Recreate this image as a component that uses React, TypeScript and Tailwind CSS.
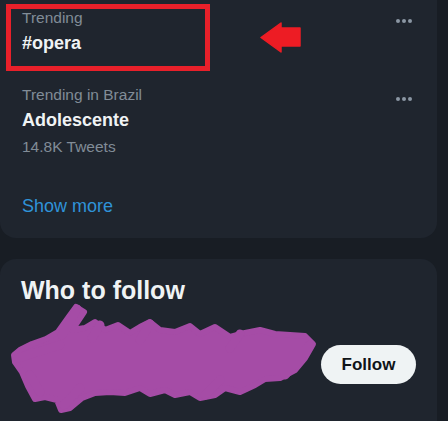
import React from "react";

type TrendProps = {
	label: string;
	topic: string;
	count?: string;
	className?: string;
};

function Dots() {
	return (
		<div className="flex gap-[2px]">
			<span className="w-[4px] h-[4px] rounded-full bg-[#8b97a3]" />
			<span className="w-[4px] h-[4px] rounded-full bg-[#8b97a3]" />
			<span className="w-[4px] h-[4px] rounded-full bg-[#8b97a3]" />
		</div>
	);
}

function Trend({ label, topic, count, className }: TrendProps) {
	return (
		<div className={"relative px-[22px] " + (className ?? "")}>
			<div className="text-[15.5px] leading-[20px] text-[#818c97]">{label}</div>
			<div className="mt-[3px] text-[18px] leading-[24px] font-bold text-[#eff3f4]">
				{topic}
			</div>
			{count && (
				<div className="mt-[5px] text-[15.5px] leading-[20px] text-[#818c97]">
					{count}
				</div>
			)}
		</div>
	);
}

function Scribble() {
	const outline =
		"M76 307 L84 312 L72 330 L85 328 L95 322 L105 330 L118 325 L130 333 L140 327 L150 322 L160 330 L175 332 L190 326 L200 334 L215 327 L230 337 L245 333 L260 330 L275 334 L290 335 L305 336 L313 344 L305 358 L295 370 L280 378 L265 379 L255 385 L240 392 L225 388 L215 395 L200 398 L190 392 L175 395 L165 390 L150 394 L140 388 L125 393 L110 392 L95 393 L82 398 L70 408 L61 410 L57 400 L45 397 L35 399 L28 386 L22 372 L15 362 L14 355 L20 350 L32 344 L46 339 L58 332 L68 318 Z";
	return (
		<svg
			className="absolute left-0 top-0 pointer-events-none"
			width="448"
			height="421"
			viewBox="0 0 448 421"
		>
			<path
				d={outline}
				fill="#a54ca6"
				stroke="#a54ca6"
				strokeWidth="6"
				strokeLinejoin="round"
			/>
			<g stroke="#a54ca6" strokeWidth="9" strokeLinecap="round" fill="none">
				<path d="M77 309 L62 335" />
				<path d="M18 358 L60 345" />
				<path d="M40 392 L30 375" />
				<path d="M64 405 L80 388" />
				<path d="M205 395 L220 380" />
				<path d="M310 345 L285 375" />
				<path d="M100 325 L92 338" />
				<path d="M150 324 L140 340" />
				<path d="M240 334 L230 348" />
			</g>
		</svg>
	);
}

export default function App() {
	return (
		<div
			className="relative flex flex-col w-[448px] h-[421px] overflow-hidden bg-[#181d24]"
			style={{ fontFamily: '"Liberation Sans", Arial, sans-serif' }}
		>
			<div className="w-[437px] shrink-0 rounded-b-2xl bg-[#1f252e] pb-[20px]">
				<Trend label="Trending" topic="#opera" className="pt-[8px] pb-[30px]" />
				<div className="absolute left-[396px] top-[19px]">
					<Dots />
				</div>
				<Trend label="Trending in Brazil" topic="Adolescente" count="14.8K Tweets" />
				<div className="absolute left-[396px] top-[97px]">
					<Dots />
				</div>
				<div className="mt-[37px] px-[22px] text-[18px] leading-[24px] text-[#2f93d8]">
					Show more
				</div>
			</div>

			<div className="mt-[21px] w-[437px] flex-1 rounded-t-2xl bg-[#1f252e] pt-[16px] px-[21px]">
				<div className="text-[25px] leading-[30px] font-bold text-[#eff3f4]">
					Who to follow
				</div>
				<div className="mt-[40px] flex justify-end">
					<button className="w-[95px] h-[39px] rounded-full bg-[#eff3f4] text-[17px] font-bold text-[#0f1419]">
						Follow
					</button>
				</div>
			</div>

			{/* annotation overlays */}
			<div className="absolute left-[6px] top-[4px] w-[204px] h-[67px] border-[5px] border-[#e8202a]" />
			<svg
				className="absolute left-[260px] top-[22px]"
				width="41"
				height="31"
				viewBox="0 0 41 31"
			>
				<path
					d="M1 15.5 L21 1 L21 6 L40 6 L40 24 L21 24 L21 30 Z"
					fill="#ed1c24"
					stroke="#ed1c24"
					strokeWidth="1.5"
					strokeLinejoin="round"
				/>
			</svg>
			<Scribble />
		</div>
	);
}
